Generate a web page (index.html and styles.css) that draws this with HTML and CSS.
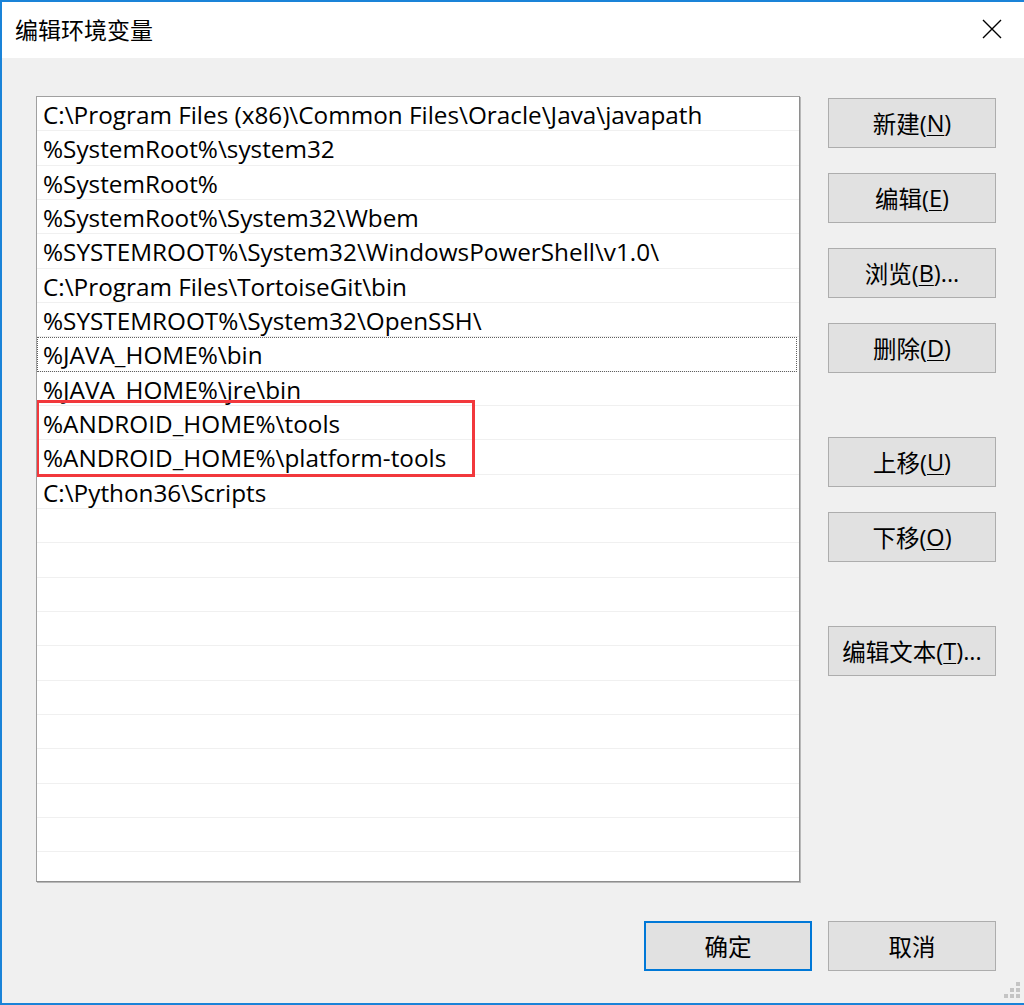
FILE: index.html
```html
<!DOCTYPE html>
<html>
<head>
<meta charset="utf-8">
<link rel="stylesheet" href="styles.css">
</head>
<body>
<div class="window">
  <div class="titlebar">
    <div class="title">编辑环境变量</div>
    <div class="close">
      <svg width="20" height="20" viewBox="0 0 20 20"><path d="M1 1 L19 19 M19 1 L1 19" stroke="#000" stroke-width="1.4" fill="none"/></svg>
    </div>
  </div>
  <div class="content">
    <div class="main">
      <div class="list">
        <div class="row">C:\Program Files (x86)\Common Files\Oracle\Java\javapath</div>
        <div class="row">%SystemRoot%\system32</div>
        <div class="row">%SystemRoot%</div>
        <div class="row">%SystemRoot%\System32\Wbem</div>
        <div class="row">%SYSTEMROOT%\System32\WindowsPowerShell\v1.0\</div>
        <div class="row">C:\Program Files\TortoiseGit\bin</div>
        <div class="row">%SYSTEMROOT%\System32\OpenSSH\</div>
        <div class="row focus">%JAVA_HOME%\bin</div>
        <div class="row">%JAVA_HOME%\jre\bin</div>
        <div class="row">%ANDROID_HOME%\tools</div>
        <div class="row">%ANDROID_HOME%\platform-tools</div>
        <div class="row">C:\Python36\Scripts</div>
        <div class="row"></div>
        <div class="row"></div>
        <div class="row"></div>
        <div class="row"></div>
        <div class="row"></div>
        <div class="row"></div>
        <div class="row"></div>
        <div class="row"></div>
        <div class="row"></div>
        <div class="row"></div>
        <div class="row"></div>
        <div class="highlight"></div>
      </div>
      <div class="side">
        <div class="btn">新建(<u>N</u>)</div>
        <div class="btn gap-s">编辑(<u>E</u>)</div>
        <div class="btn gap-s">浏览(<u>B</u>)...</div>
        <div class="btn gap-s">删除(<u>D</u>)</div>
        <div class="btn gap-l">上移(<u>U</u>)</div>
        <div class="btn gap-s">下移(<u>O</u>)</div>
        <div class="btn gap-l">编辑文本(<u>T</u>)...</div>
      </div>
    </div>
    <div class="footer">
      <div class="btn default">确定</div>
      <div class="btn">取消</div>
    </div>
    <svg class="grip" width="18" height="18" viewBox="0 0 18 18">
      <rect x="12" y="0" width="4" height="4" fill="#c4c4c4"/>
      <rect x="6" y="6" width="4" height="4" fill="#c4c4c4"/>
      <rect x="12" y="6" width="4" height="4" fill="#c4c4c4"/>
      <rect x="0" y="12" width="4" height="4" fill="#c4c4c4"/>
      <rect x="6" y="12" width="4" height="4" fill="#c4c4c4"/>
      <rect x="12" y="12" width="4" height="4" fill="#c4c4c4"/>
    </svg>
  </div>
</div>
</body>
</html>
```

FILE: styles.css
```css
* { box-sizing: border-box; }
html, body { margin: 0; padding: 0; }
body {
  width: 1024px;
  height: 1005px;
  overflow: hidden;
  font-family: "Open Sans", "Noto Sans CJK SC", sans-serif;
  background: #f0f0f0;
}
.window {
  width: 1024px;
  height: 1005px;
  border-top: 2px solid #1a83d8;
  border-left: 2px solid #1a83d8;
  border-bottom: 2px solid #1a83d8;
  display: flex;
  flex-direction: column;
  background: #f0f0f0;
}
.titlebar {
  height: 56px;
  background: #fff;
  display: flex;
  align-items: center;
  justify-content: space-between;
  padding-left: 13px;
  padding-right: 22px;
  flex-shrink: 0;
}
.title {
  font-family: "Noto Sans CJK SC", sans-serif;
  font-size: 23px;
  color: #000;
  margin-top: -2px;
}
.close { width: 20px; height: 20px; display: flex; margin-top: -2px; }
.content {
  position: relative;
  flex: 1;
  padding: 38px 0 0 34px;
  display: flex;
  flex-direction: column;
}
.main { display: flex; }
.list {
  position: relative;
  width: 764px;
  height: 786px;
  background: #fff;
  border: 1px solid #a0a0a0;
  border-right-color: #8e8e8e;
  border-bottom-color: #8e8e8e;
  box-shadow: 1px 1px 0 #b8b8b8;
  overflow: hidden;
}
.row {
  height: 34.33px;
  border-bottom: 1px solid #f0f0f0;
  padding-left: 6px;
  font-size: 24.3px;
  line-height: 36px;
  color: #000;
  white-space: nowrap;
}
.row.focus {
  outline: 1px dotted #606060;
  outline-offset: -1px;
  margin-right: 2px;
}
.highlight {
  position: absolute;
  left: -1px;
  top: 303px;
  width: 439px;
  height: 77px;
  border: 3px solid #f2383c;
}
.side {
  margin-left: 28px;
  margin-top: 2px;
  display: flex;
  flex-direction: column;
}
.btn {
  width: 168px;
  height: 50px;
  background: #e1e1e1;
  border: 1px solid #adadad;
  display: flex;
  align-items: center;
  justify-content: center;
  font-family: "Open Sans", "Noto Sans CJK SC", sans-serif;
  font-size: 23.5px;
  color: #000;
  white-space: nowrap;
}
.btn u { text-underline-offset: 3px; text-decoration-thickness: 1px; }
.gap-s { margin-top: 25px; }
.gap-l { margin-top: 64px; }
.footer {
  display: flex;
  justify-content: flex-end;
  gap: 16px;
  padding-right: 28px;
  margin-top: 39px;
}
.btn.default {
  border: 2px solid #0078d7;
}
.grip {
  position: absolute;
  right: 2px;
  bottom: 3px;
}
```
